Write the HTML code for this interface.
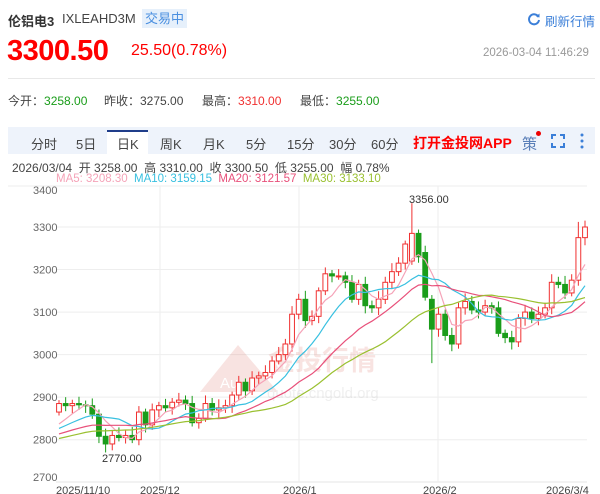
<!DOCTYPE html>
<html><head><meta charset="utf-8"><style>
*{margin:0;padding:0;box-sizing:border-box}
body{width:600px;height:494px;background:#fff;font-family:"Liberation Sans","Noto Sans CJK SC",sans-serif;position:relative;overflow:hidden;color:#333}
.a{position:absolute;white-space:nowrap}
</style></head><body>
<div class="a" style="left:8px;top:11px;font-size:13px;font-weight:bold;color:#333">伦铝电3</div>
<div class="a" style="left:62px;top:11px;font-size:13px;color:#444">IXLEAHD3M</div>
<div class="a" style="left:142px;top:9px;width:45px;height:19px;background:#e6f0fb;color:#4a8fe0;font-size:13px;text-align:center;line-height:19px">交易中</div>
<svg class="a" style="left:527px;top:12px" width="14" height="14" viewBox="0 0 14 14"><path d="M11.5 5A5 5 0 1 0 12 8" fill="none" stroke="#3b7fd8" stroke-width="2"/><path d="M9 4.5L12.5 5.5L12.5 1.5Z" fill="#3b7fd8"/></svg>
<div class="a" style="left:545px;top:11px;font-size:12.5px;color:#3b7fd8">刷新行情</div>
<div class="a" style="left:7px;top:35px;font-size:29px;font-weight:bold;color:#f00;letter-spacing:-0.5px">3300.50</div>
<div class="a" style="left:131px;top:42px;font-size:16px;color:#f00">25.50(0.78%)</div>
<div class="a" style="left:483px;top:47px;font-size:11.5px;color:#999">2026-03-04 11:46:29</div>
<div class="a" style="left:8px;top:78px;width:587px;height:1px;background:#e8e8e8"></div>
<div class="a" style="left:8px;top:92px;font-size:12px;color:#444">今开：<span style="color:#1a9d1a">3258.00</span></div>
<div class="a" style="left:104px;top:92px;font-size:12px;color:#444">昨收：3275.00</div>
<div class="a" style="left:202px;top:92px;font-size:12px;color:#444">最高：<span style="color:#f03030">3310.00</span></div>
<div class="a" style="left:300px;top:92px;font-size:12px;color:#444">最低：<span style="color:#1a9d1a">3255.00</span></div>
<div class="a" style="left:8px;top:127px;width:587px;height:27px;background:#eef3fb"></div>
<div class="a" style="left:107px;top:130px;width:41px;height:24px;background:#fff;border-top:2px solid #1f3d8a"></div>
<div class="a" style="top:134px;left:0;font-size:13px;color:#444;width:600px;height:20px">
<span class="a" style="left:31px">分时</span><span class="a" style="left:76px">5日</span><span class="a" style="left:117px">日K</span><span class="a" style="left:160px">周K</span><span class="a" style="left:203px">月K</span><span class="a" style="left:246px">5分</span><span class="a" style="left:287px">15分</span><span class="a" style="left:329px">30分</span><span class="a" style="left:371px">60分</span>
<span class="a" style="left:413px;top:-1px;color:#f00;font-weight:bold;font-size:14px">打开金投网APP</span>
<span class="a" style="left:522px;top:-1px;color:#5a7fb8;font-size:15px">策</span>
</div>
<div class="a" style="left:536px;top:131px;width:5px;height:5px;border-radius:50%;background:#e00"></div>
<svg class="a" style="left:551px;top:134px" width="14" height="14"><path d="M1 5V1H5M9 1H13V5M13 9V13H9M5 13H1V9" fill="none" stroke="#3b7fd8" stroke-width="2"/></svg>
<svg class="a" style="left:579px;top:132px" width="6" height="18"><circle cx="3" cy="3" r="1.5" fill="#3b7fd8"/><circle cx="3" cy="9" r="1.5" fill="#3b7fd8"/><circle cx="3" cy="15" r="1.5" fill="#3b7fd8"/></svg>
<div class="a" style="left:12px;top:159px;font-size:12px;color:#444">2026/03/04 &nbsp;开 3258.00 &nbsp;高 3310.00 &nbsp;收 3300.50 &nbsp;低 3255.00 &nbsp;幅 0.78%</div>
<div class="a" style="left:56px;top:173px;font-size:11.5px"><span style="color:#f5a3b8">MA5: 3208.30</span> &nbsp;<span style="color:#38c0e0">MA10: 3159.15</span> &nbsp;<span style="color:#e8507a">MA20: 3121.57</span> &nbsp;<span style="color:#9ac030">MA30: 3133.10</span></div>
<svg id="ch" class="a" style="left:0;top:0" width="600" height="494"></svg>
<script>
var s=document.getElementById('ch'),h='';
function Y(p){return 227+(3300-p)*0.4254;}
h+='<line x1="8" y1="186" x2="587" y2="186" stroke="#eee"/>';
[3300,3200,3100,3000,2900,2800].forEach(function(p){var y=Y(p);h+='<line x1="56" y1="'+y+'" x2="587" y2="'+y+'" stroke="#eee"/><text x="33" y="'+(y+4)+'" font-size="11" fill="#666">'+p+'</text>';});
h+='<text x="33" y="194" font-size="11" fill="#666">3400</text>';
h+='<text x="33" y="481" font-size="11" fill="#666">2700</text>';
h+='<line x1="56" y1="482" x2="587" y2="482" stroke="#e4e4e4"/>';
[160,299,438].forEach(function(x){h+='<line x1="'+x+'" y1="186" x2="'+x+'" y2="482" stroke="#eee"/>';});
var L=[[56,'2025/11/10'],[140,'2025/12'],[283,'2026/1'],[423,'2026/2'],[546,'2026/3/4']];
L.forEach(function(l){h+='<text x="'+l[0]+'" y="494" font-size="11" fill="#444">'+l[1]+'</text>';});
h+='<g opacity="0.13"><path d="M200 392L238 345L278 392Z" fill="#d03020"/><text x="220" y="388" font-size="15" fill="#fff">Au</text><text x="268" y="370" font-size="27" font-weight="bold" fill="#d03020">金投行情</text><text x="267" y="398" font-size="15" fill="#888">quote.cngold.org</text></g>';
var c=[2885,2880,2885,2882,2880,2860,2808,2790,2810,2805,2810,2800,2865,2835,2870,2880,2875,2888,2893,2885,2840,2850,2885,2870,2875,2880,2905,2935,2915,2945,2950,2958,2985,3000,3025,3095,3130,3080,3090,3150,3190,3185,3185,3170,3130,3165,3115,3110,3130,3170,3195,3215,3260,3285,3220,3130,3060,3095,3045,3025,3110,3125,3105,3100,3115,3110,3050,3040,3030,3085,3100,3085,3095,3110,3170,3165,3145,3175,3275,3300];
var n=c.length,x0=59,st=(585-x0)/(n-1);
var full=[];for(var i=0;i<30;i++)full.push(2770+i*2);full=full.concat(c);
for(var i=0;i<n;i++){var o=i?c[i-1]:2865,cl=c[i];
 if(i==53){o=3220;} if(i==54){o=3285;cl=3230;} if(i==55){o=3240;cl=3135;}
 var up=cl>=o,hi=Math.max(o,cl)+8+(i*7%13),lo=Math.min(o,cl)-8-(i*5%11);
 if(i==53)hi=3356; if(i==7)lo=2770; if(i==56)lo=2980; if(i==78)hi=3312;
 var x=x0+i*st,col=up?'#f03030':'#1a9d1a',y1=Y(Math.max(o,cl)),y2=Y(Math.min(o,cl));if(y2-y1<1)y2=y1+1;
 h+='<line x1="'+x+'" y1="'+Y(hi)+'" x2="'+x+'" y2="'+Y(lo)+'" stroke="'+col+'"/>';
 h+='<rect x="'+(x-2.4)+'" y="'+y1+'" width="4.8" height="'+(y2-y1)+'" fill="'+(up?'#fff':col)+'" stroke="'+col+'"/>';}
function ma(k,col){var d='';for(var i=0;i<n;i++){var j=i+30,sum=0;for(var q=0;q<k;q++)sum+=full[j-q];d+=(i?'L':'M')+(x0+i*st).toFixed(1)+' '+Y(sum/k).toFixed(1);}h+='<path d="'+d+'" fill="none" stroke="'+col+'" stroke-width="1.2"/>';}
ma(5,'#f5a3b8');ma(10,'#38c0e0');ma(20,'#e8507a');ma(30,'#9ac030');
h+='<text x="409" y="203" font-size="11" fill="#333">3356.00</text><text x="102" y="462" font-size="11" fill="#333">2770.00</text>';
s.innerHTML=h;
</script>
</body></html>
